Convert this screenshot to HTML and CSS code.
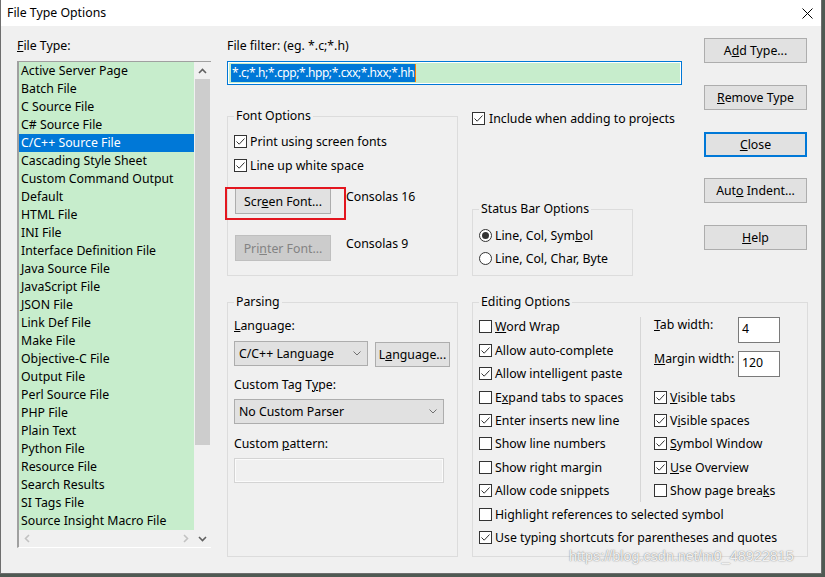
FILE: index.html
```html
<!DOCTYPE html>
<html>
<head>
<meta charset="utf-8">
<title>File Type Options</title>
<link rel="stylesheet" href="styles.css">
</head>
<body>
<div class="window">
  <div class="titlebar">
    <span class="title">File Type Options</span>
    <svg class="close-x" width="11" height="11" viewBox="0 0 11 11"><path d="M0.5 0.5 L10.5 10.5 M10.5 0.5 L0.5 10.5" stroke="#000" stroke-width="1"/></svg>
  </div>
  <div class="body">
    <div class="col-left">
      <div class="lbl"><u>F</u>ile Type:</div>
      <div class="listbox">
        <div class="items">
          <div class="item">Active Server Page</div>
          <div class="item">Batch File</div>
          <div class="item">C Source File</div>
          <div class="item">C# Source File</div>
          <div class="item sel">C/C++ Source File</div>
          <div class="item">Cascading Style Sheet</div>
          <div class="item">Custom Command Output</div>
          <div class="item">Default</div>
          <div class="item">HTML File</div>
          <div class="item">INI File</div>
          <div class="item">Interface Definition File</div>
          <div class="item">Java Source File</div>
          <div class="item">JavaScript File</div>
          <div class="item">JSON File</div>
          <div class="item">Link Def File</div>
          <div class="item">Make File</div>
          <div class="item">Objective-C File</div>
          <div class="item">Output File</div>
          <div class="item">Perl Source File</div>
          <div class="item">PHP File</div>
          <div class="item">Plain Text</div>
          <div class="item">Python File</div>
          <div class="item">Resource File</div>
          <div class="item">Search Results</div>
          <div class="item">SI Tags File</div>
          <div class="item">Source Insight Macro File</div>
        </div>
        <div class="vscroll">
          <div class="arrow"><svg width="9" height="6" viewBox="0 0 9 6"><path d="M1 5 L4.5 1.5 L8 5" fill="none" stroke="#606060" stroke-width="1.6"/></svg></div>
          <div class="thumb"></div>
          <div class="track"></div>
          <div class="arrow"><svg width="9" height="6" viewBox="0 0 9 6"><path d="M1 1 L4.5 4.5 L8 1" fill="none" stroke="#606060" stroke-width="1.6"/></svg></div>
        </div>
        <div class="hscroll">
          <div class="harrow"><svg width="6" height="9" viewBox="0 0 6 9"><path d="M5 1 L1.5 4.5 L5 8" fill="none" stroke="#c2c2c2" stroke-width="1.6"/></svg></div>
          <div class="harrow"><svg width="6" height="9" viewBox="0 0 6 9"><path d="M1 1 L4.5 4.5 L1 8" fill="none" stroke="#c2c2c2" stroke-width="1.6"/></svg></div>
        </div>
      </div>
    </div>

    <div class="col-right">
      <div class="top-row">
        <div class="top-content">
          <div class="lbl">File filter: (eg. *.c;*.h)</div>
          <div class="filter-box"><div class="filter-inner"><span class="selection">*.c;*.h;*.cpp;*.hpp;*.cxx;*.hxx;*.hh</span><span class="caret"></span></div></div>
          <div class="mid-row">
            <div class="group font-group">
              <span class="legend">Font Options</span>
              <div class="chk first"><span class="box"><svg width="11" height="11" viewBox="0 0 11 11"><path d="M1.5 5.5 L4.2 8.2 L9.5 2.5" fill="none" stroke="#333" stroke-width="1"/></svg></span><span>Print using screen fonts</span></div>
              <div class="chk second"><span class="box"><svg width="11" height="11" viewBox="0 0 11 11"><path d="M1.5 5.5 L4.2 8.2 L9.5 2.5" fill="none" stroke="#333" stroke-width="1"/></svg></span><span>Line up white space</span></div>
              <div class="font-row screen-row">
                <div class="btn-wrap">
                  <div class="btn font-btn"><span>Scr<u>e</u>en Font...</span></div>
                  <div class="highlight"></div>
                </div>
                <span class="font-name">Consolas 16</span>
              </div>
              <div class="font-row printer-row">
                <div class="btn font-btn disabled"><span>Pri<u>n</u>ter Font...</span></div>
                <span class="font-name">Consolas 9</span>
              </div>
            </div>
            <div class="mid-right">
              <div class="chk include"><span class="box"><svg width="11" height="11" viewBox="0 0 11 11"><path d="M1.5 5.5 L4.2 8.2 L9.5 2.5" fill="none" stroke="#333" stroke-width="1"/></svg></span><span>Include when adding to projects</span></div>
              <div class="group status-group">
                <span class="legend">Status Bar Options</span>
                <div class="radio-row first"><span class="radio on"></span><span>Line, Col, Sym<u>b</u>ol</span></div>
                <div class="radio-row second"><span class="radio"></span><span>Line, Col, Char, Byte</span></div>
              </div>
            </div>
          </div>
        </div>
        <div class="buttons">
          <div class="btn side-btn"><span>A<u>d</u>d Type...</span></div>
          <div class="btn side-btn"><span><u>R</u>emove Type</span></div>
          <div class="btn side-btn default"><span><u>C</u>lose</span></div>
          <div class="btn side-btn"><span>Aut<u>o</u> Indent...</span></div>
          <div class="btn side-btn"><span><u>H</u>elp</span></div>
        </div>
      </div>

      <div class="bottom-row">
        <div class="group parsing-group">
          <span class="legend">Parsing</span>
          <div class="lbl p-lang"><u>L</u>anguage:</div>
          <div class="lang-row">
            <div class="combo lang-combo"><span>C/C++ Language</span><svg width="8" height="5" viewBox="0 0 8 5"><path d="M0.5 0.5 L4 4 L7.5 0.5" fill="none" stroke="#707070" stroke-width="1"/></svg></div>
            <div class="btn lang-btn"><span>L<u>a</u>nguage...</span></div>
          </div>
          <div class="lbl p-tag">Custom Tag T<u>y</u>pe:</div>
          <div class="combo tag-combo"><span>No Custom Parser</span><svg width="8" height="5" viewBox="0 0 8 5"><path d="M0.5 0.5 L4 4 L7.5 0.5" fill="none" stroke="#707070" stroke-width="1"/></svg></div>
          <div class="lbl p-pat">Custom <u>p</u>attern:</div>
          <div class="pattern-box"></div>
        </div>

        <div class="group editing-group">
          <span class="legend">Editing Options</span>
          <div class="edit-top">
            <div class="edit-left">
              <div class="chk row"><span class="box off"></span><span><u>W</u>ord Wrap</span></div>
              <div class="chk row"><span class="box"><svg width="11" height="11" viewBox="0 0 11 11"><path d="M1.5 5.5 L4.2 8.2 L9.5 2.5" fill="none" stroke="#333" stroke-width="1"/></svg></span><span>Allow auto-complete</span></div>
              <div class="chk row"><span class="box"><svg width="11" height="11" viewBox="0 0 11 11"><path d="M1.5 5.5 L4.2 8.2 L9.5 2.5" fill="none" stroke="#333" stroke-width="1"/></svg></span><span>Allow intelligent paste</span></div>
              <div class="chk row"><span class="box off"></span><span>E<u>x</u>pand tabs to spaces</span></div>
              <div class="chk row"><span class="box"><svg width="11" height="11" viewBox="0 0 11 11"><path d="M1.5 5.5 L4.2 8.2 L9.5 2.5" fill="none" stroke="#333" stroke-width="1"/></svg></span><span>Enter inserts new line</span></div>
              <div class="chk row"><span class="box off"></span><span>Show line numbers</span></div>
              <div class="chk row"><span class="box off"></span><span>Show right margin</span></div>
              <div class="chk row"><span class="box"><svg width="11" height="11" viewBox="0 0 11 11"><path d="M1.5 5.5 L4.2 8.2 L9.5 2.5" fill="none" stroke="#333" stroke-width="1"/></svg></span><span>Allow code snippets</span></div>
            </div>
            <div class="separator"></div>
            <div class="edit-right">
              <div class="num-block">
                <div class="num-row"><span class="num-lbl"><u>T</u>ab width:</span><div class="num-box">4</div></div>
                <div class="num-row"><span class="num-lbl"><u>M</u>argin width:</span><div class="num-box">120</div></div>
              </div>
              <div class="chk row"><span class="box"><svg width="11" height="11" viewBox="0 0 11 11"><path d="M1.5 5.5 L4.2 8.2 L9.5 2.5" fill="none" stroke="#333" stroke-width="1"/></svg></span><span><u>V</u>isible tabs</span></div>
              <div class="chk row"><span class="box"><svg width="11" height="11" viewBox="0 0 11 11"><path d="M1.5 5.5 L4.2 8.2 L9.5 2.5" fill="none" stroke="#333" stroke-width="1"/></svg></span><span>V<u>i</u>sible spaces</span></div>
              <div class="chk row"><span class="box"><svg width="11" height="11" viewBox="0 0 11 11"><path d="M1.5 5.5 L4.2 8.2 L9.5 2.5" fill="none" stroke="#333" stroke-width="1"/></svg></span><span><u>S</u>ymbol Window</span></div>
              <div class="chk row"><span class="box"><svg width="11" height="11" viewBox="0 0 11 11"><path d="M1.5 5.5 L4.2 8.2 L9.5 2.5" fill="none" stroke="#333" stroke-width="1"/></svg></span><span><u>U</u>se Overview</span></div>
              <div class="chk row"><span class="box off"></span><span>Show page brea<u>k</u>s</span></div>
            </div>
          </div>
          <div class="chk row"><span class="box off"></span><span>Highlight references to selected symbol</span></div>
          <div class="chk row"><span class="box"><svg width="11" height="11" viewBox="0 0 11 11"><path d="M1.5 5.5 L4.2 8.2 L9.5 2.5" fill="none" stroke="#333" stroke-width="1"/></svg></span><span>Use typing shortcuts for parentheses and quotes</span></div>
        </div>
      </div>
    </div>
  </div>
  <div class="watermark">https://blog.csdn.net/m0_48922815</div>
</div>
</body>
</html>
```

FILE: styles.css
```css
* { box-sizing: border-box; }
html, body { margin: 0; padding: 0; }
body {
  background: #4f5a53;
  width: 825px;
  height: 577px;
  overflow: hidden;
  font-family: "Noto Sans", "Open Sans", sans-serif;
  font-size: 12.3px;
  color: #000;
}
u { text-decoration: underline; text-underline-offset: 1px; }

.window {
  position: relative;
  width: 822px;
  height: 574px;
  background: #f0f0f0;
  border: 1px solid #6e6e6e;
  border-top: none;
}
.titlebar {
  height: 26px;
  background: #fff;
  display: flex;
  align-items: center;
  justify-content: space-between;
  padding: 0 8px 0 6px;
}
.title { line-height: 16px; }

.body {
  display: flex;
  padding: 12px 0 0 16px;
}
.lbl { line-height: 16px; height: 16px; white-space: nowrap; }

/* left column */
.col-left { width: 194px; }
.col-left .lbl { margin-bottom: 7px; }
.listbox {
  display: grid;
  grid-template-columns: 175px 17px;
  grid-template-rows: 468px 17px;
  border-top: 1px solid #a0a0a0;
  border-left: 2px solid #a0a0a0;
  border-bottom: 1px solid #fff;
  width: 194px;
}
.items { grid-column: 1; grid-row: 1; background: #c7edcc; }
.item { height: 18px; line-height: 18px; padding-left: 2px; white-space: nowrap; }
.item.sel { background: #0078d7; color: #fff; }
.vscroll {
  grid-column: 2;
  grid-row: 1 / 3;
  background: #f0f0f0;
  display: flex;
  flex-direction: column;
  align-items: center;
}
.arrow { height: 17px; width: 17px; display: flex; align-items: center; justify-content: center; }
.thumb { width: 15px; height: 366px; background: #cdcdcd; }
.track { flex: 1; }
.hscroll {
  grid-column: 1;
  grid-row: 2;
  background: #f0f0f0;
  display: flex;
  justify-content: space-between;
  align-items: center;
  padding: 0 5px;
}
.harrow { display: flex; align-items: center; }

/* right area */
.col-right { margin-left: 16px; width: 581px; display: flex; flex-direction: column; }
.top-row { display: flex; align-items: flex-start; }
.top-content { width: 455px; }
.top-content > .lbl { margin-bottom: 7px; }
.filter-box {
  height: 24px;
  border: 1px solid #0078d7;
  padding: 1px;
  background: #fff;
}
.filter-inner {
  height: 20px;
  background: #c7edcc;
  display: flex;
  align-items: center;
  padding-left: 2px;
}
.selection { background: #0078d7; color: #fff; line-height: 18px; padding: 0 1px; font-size: 12px; letter-spacing: -0.42px; }
.caret { width: 1px; height: 18px; background: #ff7f00; }

.mid-row { display: flex; align-items: flex-start; margin-top: 25px; }

.group {
  position: relative;
  border: 1px solid #dcdcdc;
}
.legend {
  position: absolute;
  top: -9px;
  left: 6px;
  padding: 0 2px;
  background: #f0f0f0;
  line-height: 16px;
  white-space: nowrap;
}

.font-group { width: 231px; height: 160px; margin-top: 6px; padding: 16px 0 0 6px; }
.chk { display: flex; align-items: center; height: 16px; white-space: nowrap; }
.box {
  width: 13px; height: 13px;
  border: 1px solid #333;
  background: #fff;
  margin-right: 3px;
  flex: none;
  display: flex;
}
.box svg { display: block; }
.font-group .chk.second { margin-top: 8px; }
.font-row { display: flex; align-items: flex-start; }
.screen-row { margin-top: 15px; }
.printer-row { margin-top: 21px; }
.btn-wrap { position: relative; margin-left: 1px; }
.printer-row .btn { margin-left: 1px; }
.btn {
  background: #e1e1e1;
  border: 1px solid #adadad;
  display: flex;
  align-items: center;
  justify-content: center;
  white-space: nowrap;
}
.font-btn { width: 96px; height: 26px; }
.btn.disabled { background: #cccccc; border-color: #bfbfbf; color: #838383; }
.highlight {
  position: absolute;
  left: -10px;
  top: -1px;
  width: 121px;
  height: 33px;
  border: 2px solid #e3161f;
}
.font-name { margin-left: 15px; margin-top: 1px; line-height: 16px; }

.mid-right { margin-left: 14px; }
.chk.include .box { margin-right: 4px; }
.status-group { width: 161px; height: 67px; margin-top: 83px; padding: 17px 0 0 6px; }
.radio-row { display: flex; align-items: center; height: 16px; white-space: nowrap; }
.radio-row.second { margin-top: 7px; }
.radio {
  width: 13px; height: 13px;
  border: 1px solid #333;
  border-radius: 50%;
  background: #fff;
  margin-right: 3px;
  display: flex;
  align-items: center;
  justify-content: center;
  flex: none;
}
.radio.on::after {
  content: "";
  width: 7px; height: 7px;
  border-radius: 50%;
  background: #333;
}

.buttons {
  margin-left: 22px;
  width: 103px;
  display: flex;
  flex-direction: column;
  gap: 21.8px;
}
.side-btn { height: 25px; }
.side-btn.default { border: 2px solid #0078d7; }

/* bottom */
.bottom-row { display: flex; align-items: flex-start; margin-top: 26px; }
.parsing-group { width: 231px; height: 255px; padding: 15px 0 0 6px; }
.lang-row { display: flex; align-items: flex-start; margin-top: 7px; }
.combo {
  height: 25px;
  background: #e1e1e1;
  border: 1px solid #adadad;
  display: flex;
  align-items: center;
  justify-content: space-between;
  padding: 0 6px 0 4px;
  white-space: nowrap;
}
.lang-combo { width: 134px; }
.lang-btn { width: 75px; height: 25px; margin-left: 7px; margin-top: 1px; }
.p-tag { margin-top: 10px; }
.tag-combo { width: 210px; margin-top: 6px; }
.p-pat { margin-top: 12px; }
.pattern-box {
  width: 210px; height: 25px; margin-top: 6px;
  border: 1px solid #d4d4d4;
  box-shadow: inset 0 0 0 1px #fbfbfb;
  background: #f0f0f0;
}

.editing-group { width: 336px; height: 255px; margin-left: 14px; padding: 12.3px 0 0 6px; }
.chk.row { height: 23.4px; }
.edit-top { display: flex; align-items: flex-start; }
.edit-left { width: 161px; }
.separator { width: 1px; height: 185px; background: #d6d6d6; margin-top: 1.7px; }
.edit-right { margin-left: 13px; }
.num-block { height: 70.2px; padding-top: 1.7px; display: flex; flex-direction: column; gap: 8px; }
.num-row { display: flex; align-items: flex-start; height: 26px; }
.num-lbl { width: 84px; line-height: 16px; white-space: nowrap; }
.num-box {
  width: 42px; height: 26px;
  background: #fff;
  border: 1px solid #7a7a7a;
  padding: 3px 0 0 3px;
  line-height: 16px;
}

.watermark {
  position: absolute;
  left: 568px;
  top: 546px;
  font-family: "Liberation Sans", Arial, sans-serif;
  font-size: 14.4px;
  line-height: 20px;
  color: rgba(255, 255, 255, 0.9);
  text-shadow: 0 0 1px rgba(60, 60, 60, 0.6), 0 0 2px rgba(120, 120, 120, 0.4);
  white-space: nowrap;
}
```
